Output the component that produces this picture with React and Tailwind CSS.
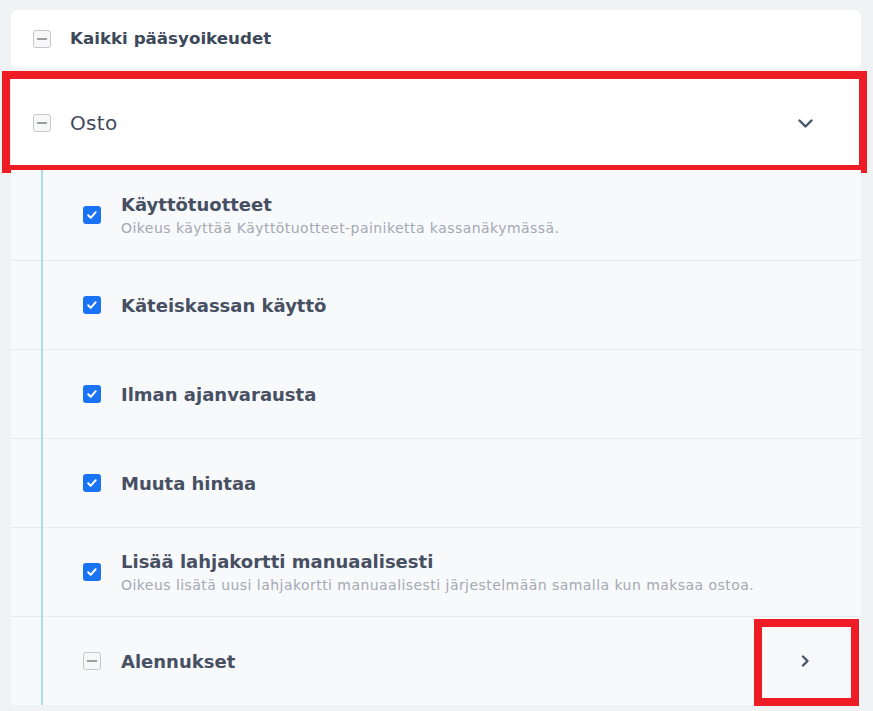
import React from 'react'

const font = { fontFamily: '"DejaVu Sans", "Noto Sans", sans-serif' }

const items = [
  {
    title: 'Käyttötuotteet',
    desc: 'Oikeus käyttää Käyttötuotteet-painiketta kassanäkymässä.',
  },
  { title: 'Käteiskassan käyttö' },
  { title: 'Ilman ajanvarausta' },
  { title: 'Muuta hintaa' },
  {
    title: 'Lisää lahjakortti manuaalisesti',
    desc: 'Oikeus lisätä uusi lahjakortti manuaalisesti järjestelmään samalla kun maksaa ostoa.',
  },
]

function MinusBox() {
  return (
    <span className="flex h-[18px] w-[18px] shrink-0 items-center justify-center rounded-[3px] border border-[#c4c7cc] bg-[#f7f7f8]">
      <span className="h-[2px] w-[10px] bg-[#9a9ea5]" />
    </span>
  )
}

function CheckBox() {
  return (
    <span className="flex h-[18px] w-[18px] shrink-0 items-center justify-center rounded-[3px] bg-[#1a73f5]">
      <svg width="12" height="12" viewBox="0 0 12 12" fill="none">
        <path d="M2.2 6.3l2.5 2.5 5-5.6" stroke="white" strokeWidth="2" strokeLinecap="round" strokeLinejoin="round" />
      </svg>
    </span>
  )
}

export default function App() {
  return (
    <div className="min-h-screen w-[873px] bg-[#f1f2f4] pl-[11px] pt-[10px]" style={font}>
      <div className="w-[850px]">
        {/* top row */}
        <div className="flex h-[58px] items-center gap-[19px] rounded-md bg-white pl-[22px]">
          <MinusBox />
          <span className="text-[16.7px] font-bold text-[#3d4859]">Kaikki pääsyoikeudet</span>
        </div>

        {/* Osto */}
        <div className="relative mt-[4px] flex h-[98px] items-center bg-white pl-[22px] pr-[48px] pt-[4px]">
          <MinusBox />
          <span className="ml-[19px] flex-1 text-[20px] tracking-[0.3px] text-[#3f4a5c]">Osto</span>
          <svg width="15" height="9" viewBox="0 0 15 9" fill="none">
            <path d="M1.5 1.5l6 6 6-6" stroke="#4a5468" strokeWidth="2.4" strokeLinecap="round" strokeLinejoin="round" />
          </svg>
          <div className="pointer-events-none absolute -bottom-[3px] -left-[9px] -right-[6px] -top-[1px] border-[8px] border-[#ee1c25]" />
        </div>

        {/* sub list */}
        <div className="relative bg-[#f8f9fb]">
          <div className="absolute bottom-0 left-[30px] top-0 w-[2px] bg-[#a9dbef]" />
          {items.map((it, i) => (
            <div
              key={it.title}
              className={`flex items-center border-b border-[#e8eaed] pl-[72px] ${i === 0 ? 'h-[91px]' : 'h-[89px]'}`}
            >
              <CheckBox />
              <div className="ml-[20px] flex flex-col">
                <span className="text-[18px] font-semibold leading-[23px] text-[#475062]">{it.title}</span>
                {it.desc && (
                  <span className="mt-[4px] text-[14px] leading-[17px] tracking-[0.45px] text-[#a3a9b4]">{it.desc}</span>
                )}
              </div>
            </div>
          ))}
          <div className="relative flex h-[88px] items-center pl-[72px] pr-[51px]">
            <MinusBox />
            <span className="ml-[20px] flex-1 text-[18px] font-semibold text-[#475062]">Alennukset</span>
            <svg width="9" height="12" viewBox="0 0 9 12" fill="none">
              <path d="M2 1.5l4.5 4.5L2 10.5" stroke="#4a5468" strokeWidth="2.4" strokeLinecap="round" strokeLinejoin="round" />
            </svg>
            <div className="pointer-events-none absolute left-[743px] top-[2px] h-[87px] w-[105px] border-[8px] border-[#ee1c25]" />
          </div>
        </div>
      </div>
    </div>
  )
}
